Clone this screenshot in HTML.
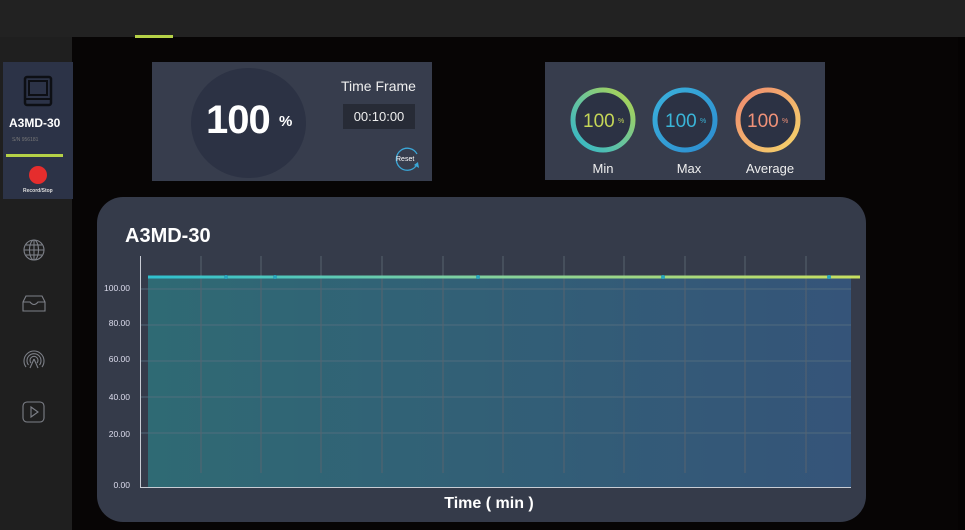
<!DOCTYPE html>
<html><head><style>
*{margin:0;padding:0;box-sizing:border-box}
body{width:965px;height:530px;background:#070505;position:relative;overflow:hidden;font-family:"Liberation Sans",sans-serif;color:#fff}
.abs{position:absolute}
</style></head><body>
<div class="abs" style="left:0;top:0;width:965px;height:37px;background:#222222"></div>
<div class="abs" style="left:135px;top:35px;width:38px;height:3px;background:#b5d147"></div>
<div class="abs" style="left:0;top:37px;width:72px;height:493px;background:#1f1f1f"></div>
<div class="abs" style="left:958px;top:37px;width:7px;height:493px;background:#050303"></div>
<!-- device card -->
<div class="abs" style="left:3px;top:62px;width:70px;height:137px;background:#2c3347"></div>
<svg class="abs" style="left:23px;top:75px" width="30" height="32" viewBox="0 0 30 32"><rect x="2" y="2" width="26" height="28" rx="2" fill="none" stroke="#0d0f14" stroke-width="2.5"/><rect x="6" y="6" width="18" height="14" fill="none" stroke="#0d0f14" stroke-width="2"/><line x1="2" y1="24" x2="28" y2="24" stroke="#0d0f14" stroke-width="2"/></svg>
<div class="abs" style="left:9px;top:116px;font-size:12px;font-weight:bold">A3MD-30</div>
<div class="abs" style="left:12px;top:137px;font-size:5px;color:#777">S/N 956181</div>
<div class="abs" style="left:6px;top:154px;width:57px;height:3px;background:#b5d147"></div>
<div class="abs" style="left:29px;top:166px;width:18px;height:18px;border-radius:50%;background:#e52d2d"></div>
<div class="abs" style="left:23px;top:188px;font-size:5px;font-weight:bold;color:#ddd">Record/Stop</div>
<!-- sidebar icons -->
<svg class="abs" style="left:22px;top:238px" width="24" height="24" viewBox="0 0 24 24" fill="none" stroke="#7d8088" stroke-width="1.1"><circle cx="12" cy="12" r="10"/><ellipse cx="12" cy="12" rx="4.5" ry="10"/><line x1="2" y1="12" x2="22" y2="12"/><line x1="4" y1="7" x2="20" y2="7"/><line x1="4" y1="17" x2="20" y2="17"/><line x1="12" y1="2" x2="12" y2="22"/></svg>
<svg class="abs" style="left:22px;top:295px" width="24" height="18" viewBox="0 0 24 18" fill="none" stroke="#7d8088" stroke-width="1.1"><path d="M1 7 L4 1 H20 L23 7 V16 H1 Z M1 7 H8 Q12 12 16 7 H23"/></svg>
<svg class="abs" style="left:22px;top:346px" width="24" height="24" viewBox="0 0 24 24" fill="none" stroke="#7d8088" stroke-width="1.1"><path d="M4 21 A10 10 0 1 1 20 21"/><path d="M6.5 19 A7 7 0 1 1 17.5 19"/><path d="M9 17 A4 4 0 1 1 15 17"/><path d="M12 13 L8 22 M12 13 L16 22"/></svg>
<svg class="abs" style="left:22px;top:401px" width="23" height="22" viewBox="0 0 23 22" fill="none" stroke="#7d8088" stroke-width="1.1"><rect x="1" y="1" width="21" height="20" rx="4"/><path d="M9 6 L16 11 L9 16 Z"/></svg>
<!-- card 1 -->
<div class="abs" style="left:152px;top:62px;width:280px;height:119px;background:#373d4d"></div>
<div class="abs" style="left:191px;top:68px;width:115px;height:110px;border-radius:50%;background:#2c3244"></div>
<div class="abs" style="left:206px;top:98px;font-size:40px;font-weight:bold;letter-spacing:-1px">100</div>
<div class="abs" style="left:279px;top:113px;font-size:15px;font-weight:bold">%</div>
<div class="abs" style="left:341px;top:78px;font-size:14px;color:#eee">Time Frame</div>
<div class="abs" style="left:343px;top:104px;width:72px;height:25px;background:#272b36;font-size:13px;color:#eee;line-height:25px;text-align:center">00:10:00</div>
<svg class="abs" style="left:392px;top:145px" width="30" height="28" viewBox="0 0 30 28"><path d="M24 21 A11 11 0 1 1 25 9" fill="none" stroke="#3aa7d8" stroke-width="1.3"/><path d="M22 20 L26 17 L27 23 Z" fill="#3aa7d8"/><text x="4" y="16" font-size="7" fill="#fff" font-family="Liberation Sans">Reset</text></svg>
<!-- card 2 -->
<div class="abs" style="left:545px;top:62px;width:280px;height:118px;background:#373d4d"></div>
<svg class="abs" style="left:545px;top:62px" width="280" height="118" viewBox="0 0 280 118">
<defs>
<linearGradient id="g1" x1="1" y1="0" x2="0" y2="1"><stop offset="0" stop-color="#b5d64a"/><stop offset="0.5" stop-color="#6cc59a"/><stop offset="1" stop-color="#2eb6cd"/></linearGradient>
<linearGradient id="g2" x1="0" y1="0" x2="1" y2="1"><stop offset="0" stop-color="#3ab0db"/><stop offset="1" stop-color="#2d8dd0"/></linearGradient>
<linearGradient id="g3" x1="0" y1="0" x2="1" y2="1"><stop offset="0" stop-color="#f08a70"/><stop offset="1" stop-color="#f4d46a"/></linearGradient>
</defs>
<circle cx="58" cy="58" r="30" fill="#2c3244" stroke="url(#g1)" stroke-width="5"/>
<circle cx="140" cy="58" r="30" fill="#2c3244" stroke="url(#g2)" stroke-width="5"/>
<circle cx="223" cy="58" r="30" fill="#2c3244" stroke="url(#g3)" stroke-width="5"/>
<text x="38" y="65" font-size="19" fill="#c5d657" font-family="Liberation Sans">100</text><text x="73" y="61" font-size="7" fill="#c5d657" font-family="Liberation Sans">%</text>
<text x="120" y="65" font-size="19" fill="#3ab5d8" font-family="Liberation Sans">100</text><text x="155" y="61" font-size="7" fill="#3ab5d8" font-family="Liberation Sans">%</text>
<text x="202" y="65" font-size="19" fill="#ef9178" font-family="Liberation Sans">100</text><text x="237" y="61" font-size="7" fill="#ef9178" font-family="Liberation Sans">%</text>
<text x="58" y="111" font-size="13" fill="#eee" text-anchor="middle" font-family="Liberation Sans">Min</text>
<text x="144" y="111" font-size="13" fill="#eee" text-anchor="middle" font-family="Liberation Sans">Max</text>
<text x="225" y="111" font-size="13" fill="#eee" text-anchor="middle" font-family="Liberation Sans">Average</text>
</svg>
<!-- chart card -->
<div class="abs" style="left:97px;top:197px;width:769px;height:325px;background:#353b4a;border-radius:26px"></div>
<div class="abs" style="left:125px;top:225px;font-size:20px;font-weight:bold">A3MD-30</div>
<svg class="abs" style="left:0;top:0" width="965" height="530" viewBox="0 0 965 530">
<defs>
<linearGradient id="fill" x1="0" y1="0" x2="1" y2="0"><stop offset="0" stop-color="#2f6a74"/><stop offset="1" stop-color="#355479"/></linearGradient>
<linearGradient id="ln" gradientUnits="userSpaceOnUse" x1="148" y1="0" x2="860" y2="0"><stop offset="0" stop-color="#2fc0cf"/><stop offset="0.45" stop-color="#7fd0a0"/><stop offset="1" stop-color="#c8e060"/></linearGradient>
</defs>
<rect x="148" y="277" width="703" height="210" fill="url(#fill)"/>
<g stroke="#587080" stroke-width="1" opacity="0.8">
<line x1="141" y1="289" x2="851" y2="289"/><line x1="141" y1="325" x2="851" y2="325"/><line x1="141" y1="361" x2="851" y2="361"/><line x1="141" y1="397" x2="851" y2="397"/><line x1="141" y1="433" x2="851" y2="433"/>
</g>
<g stroke="#56636f" stroke-width="1">
<line x1="201" y1="256" x2="201" y2="473"/><line x1="261" y1="256" x2="261" y2="473"/><line x1="321" y1="256" x2="321" y2="473"/><line x1="382" y1="256" x2="382" y2="473"/><line x1="443" y1="256" x2="443" y2="473"/><line x1="503" y1="256" x2="503" y2="473"/><line x1="564" y1="256" x2="564" y2="473"/><line x1="624" y1="256" x2="624" y2="473"/><line x1="685" y1="256" x2="685" y2="473"/><line x1="745" y1="256" x2="745" y2="473"/><line x1="806" y1="256" x2="806" y2="473"/>
</g>
<line x1="140.5" y1="256" x2="140.5" y2="488" stroke="#c8ccd4" stroke-width="1"/>
<line x1="140" y1="487.5" x2="851" y2="487.5" stroke="#c8ccd4" stroke-width="1"/>
<rect x="148" y="275.5" width="712" height="3" fill="url(#ln)"/>
<g fill="#2aa6be"><circle cx="226" cy="277" r="2"/><circle cx="275" cy="277" r="2"/><circle cx="478" cy="277" r="2"/><circle cx="663" cy="277" r="2"/><circle cx="829" cy="277" r="2"/></g>
<g font-size="8.5" fill="#dde" font-family="Liberation Sans" text-anchor="end">
<text x="130" y="291">100.00</text><text x="130" y="326">80.00</text><text x="130" y="362">60.00</text><text x="130" y="400">40.00</text><text x="130" y="437">20.00</text><text x="130" y="488">0.00</text>
</g>
<text x="489" y="508" font-size="16" font-weight="bold" fill="#fff" text-anchor="middle" font-family="Liberation Sans">Time ( min )</text>
</svg>
</body></html>
